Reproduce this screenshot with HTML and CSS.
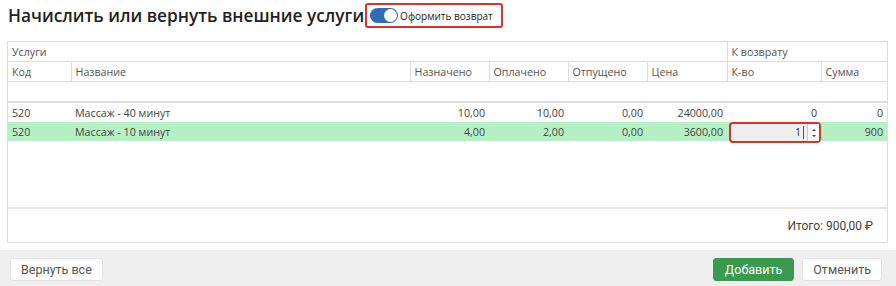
FILE: index.html
```html
<!DOCTYPE html>
<html>
<head>
    <link rel="stylesheet" href="styles.css">
</head>
<body>
    <div class="dialog">
        <div class="dialog-header">
            <h1 class="dialog-title">Начислить или вернуть внешние услуги</h1>
            <label class="return-switch">
                <span class="toggle"><span class="knob"></span></span>
                <span class="toggle-label">Оформить возврат</span>
            </label>
        </div>

        <div class="grid-box">
            <table class="grid">
                <colgroup>
                    <col style="width:63px">
                    <col style="width:339px">
                    <col style="width:79px">
                    <col style="width:79px">
                    <col style="width:79px">
                    <col style="width:80px">
                    <col style="width:94px">
                    <col>
                </colgroup>
                <thead>
                    <tr class="group-row">
                        <th colspan="6">Услуги</th>
                        <th colspan="2" class="sep">К возврату</th>
                    </tr>
                    <tr class="head-row">
                        <th>Код</th>
                        <th class="sep">Название</th>
                        <th class="sep">Назначено</th>
                        <th class="sep">Оплачено</th>
                        <th class="sep">Отпущено</th>
                        <th class="sep">Цена</th>
                        <th class="sep">К-во</th>
                        <th class="sep">Сумма</th>
                    </tr>
                    <tr class="filter-row"><td colspan="8"></td></tr>
                </thead>
                <tbody>
                    <tr>
                        <td>520</td>
                        <td>Массаж - 40 минут</td>
                        <td class="num">10,00</td>
                        <td class="num">10,00</td>
                        <td class="num">0,00</td>
                        <td class="num">24000,00</td>
                        <td class="num">0</td>
                        <td class="num">0</td>
                    </tr>
                    <tr class="selected">
                        <td>520</td>
                        <td>Массаж - 10 минут</td>
                        <td class="num">4,00</td>
                        <td class="num">2,00</td>
                        <td class="num">0,00</td>
                        <td class="num">3600,00</td>
                        <td class="qty-cell">
                            <div class="qty-box">
                                <span class="qty-value">1</span>
                                <span class="spin">
                                    <span class="spin-up"></span>
                                    <span class="spin-down"></span>
                                </span>
                            </div>
                        </td>
                        <td class="num">900</td>
                    </tr>
                </tbody>
            </table>
            <div class="grid-empty"></div>
            <div class="grid-total">Итого: 900,00 ₽</div>
        </div>
    </div>

    <div class="dialog-footer">
        <button class="btn">Вернуть все</button>
        <div class="footer-right">
            <button class="btn btn-primary">Добавить</button>
            <button class="btn">Отменить</button>
        </div>
    </div>
</body>
</html>
```

FILE: styles.css
```css
body {
    margin: 0;
    width: 896px;
    height: 286px;
    overflow: hidden;
    background: #fff;
    font-family: "Open Sans", "Noto Sans", sans-serif;
    color: #333;
}
.dialog {
    padding: 3px 8px 0 7px;
}
.dialog-header {
    display: flex;
    align-items: center;
    height: 25px;
}
.dialog-title {
    margin: 0 0 0 1px;
    font-size: 17.3px;
    font-weight: 600;
    color: #222;
}
.return-switch {
    display: flex;
    align-items: center;
    gap: 2px;
    height: 21px;
    margin-left: 1px;
    padding: 0 8px 0 3px;
    border: 2px solid #e0302a;
    border-radius: 3px;
}
.toggle {
    position: relative;
    width: 28px;
    height: 15px;
    border-radius: 8px;
    background: #2f6db6;
}
.knob {
    position: absolute;
    right: 1px;
    top: 1px;
    width: 13px;
    height: 13px;
    border-radius: 50%;
    background: #fff;
}
.toggle-label {
    font-size: 10px;
    color: #222;
}
.grid-box {
    margin-top: 13px;
    border: 1px solid #ddd;
    width: 879px;
}
.grid {
    width: 100%;
    border-collapse: collapse;
    table-layout: fixed;
    font-size: 10.7px;
}
.grid th {
    text-align: left;
    font-weight: normal;
    color: #555;
    height: 19px;
    padding: 0 4px;
    border-bottom: 1px solid #ddd;
}
.grid th.sep {
    border-left: 1px solid #ddd;
}
.filter-row td {
    height: 14px;
    padding: 0;
    border-bottom: 2px solid #ddd;
}
.grid td {
    height: 19px;
    padding: 0 4px;
    color: #444;
    white-space: nowrap;
}
.grid td.num {
    text-align: right;
}
.grid tr.selected td {
    background: #b6f0c5;
}
.grid td.qty-cell {
    padding: 0 0 0 2px;
}
.qty-box {
    display: flex;
    align-items: center;
    justify-content: flex-end;
    height: 17px;
    margin: 0 0 -2px;
    border: 2px solid #e0302a;
    border-radius: 4px;
    background: #efefef;
    width: 88px;
}
.qty-value {
    padding-right: 2px;
    border-right: 1px solid #555;
    line-height: 13px;
    color: #333;
}
.spin {
    display: flex;
    flex-direction: column;
    justify-content: center;
    align-items: center;
    gap: 4px;
    width: 11px;
    height: 17px;
    margin-left: 3px;
    border-left: 1px solid #ccc;
    background: #fafafa;
}
.spin-up, .spin-down {
    width: 0;
    height: 0;
    border-left: 2px solid transparent;
    border-right: 2px solid transparent;
}
.spin-up {
    border-bottom: 2px solid #444;
}
.spin-down {
    border-top: 2px solid #444;
}
.grid-empty {
    height: 66px;
    border-bottom: 2px solid #e5e5e5;
}
.grid-total {
    height: 33px;
    display: flex;
    align-items: center;
    justify-content: flex-end;
    padding-right: 14px;
    font-family: "Liberation Sans Narrow", "Roboto", sans-serif;
    font-size: 12px;
    color: #444;
}
.dialog-footer {
    display: flex;
    justify-content: space-between;
    align-items: center;
    margin-top: 7px;
    height: 39px;
    padding: 0 14px 0 10px;
    background: #efefef;
}
.footer-right {
    display: flex;
    gap: 8px;
}
.btn {
    height: 23px;
    padding: 0 10px;
    border: 1px solid #e3e3e3;
    border-radius: 3px;
    background: #fff;
    color: #555;
    font-family: "Liberation Sans Narrow", "Roboto", sans-serif;
    font-size: 12.5px;
    cursor: pointer;
}
.btn-primary {
    background: #3b9950;
    border-color: #3b9950;
    color: #fff;
    padding: 0 11px;
}
```
